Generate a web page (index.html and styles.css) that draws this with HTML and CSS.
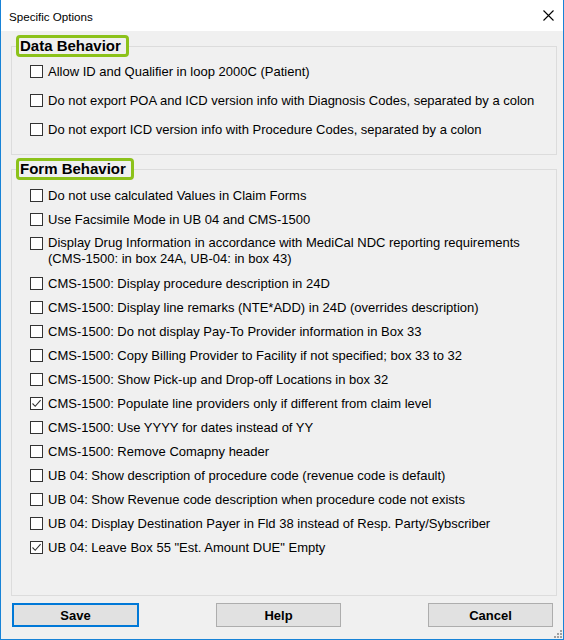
FILE: index.html
```html
<!DOCTYPE html>
<html>
<head>
<meta charset="utf-8">
<title>Specific Options</title>
<link rel="stylesheet" href="styles.css">
</head>
<body>
<div class="window">
  <div class="titlebar">
    <span class="title">Specific Options</span>
    <svg class="close" width="11" height="11" viewBox="0 0 11 11"><path d="M0.5 0.5 L10.5 10.5 M10.5 0.5 L0.5 10.5" stroke="#000" stroke-width="1.1" fill="none"/></svg>
  </div>
  <div class="body">
    <fieldset class="group group-data">
      <legend class="legend">Data Behavior</legend>
      <div class="row"><span class="cb"></span><span class="label">Allow ID and Qualifier in loop 2000C (Patient)</span></div>
      <div class="row"><span class="cb"></span><span class="label">Do not export POA and ICD version info with Diagnosis Codes, separated by a colon</span></div>
      <div class="row"><span class="cb"></span><span class="label">Do not export ICD version info with Procedure Codes, separated by a colon</span></div>
    </fieldset>
    <fieldset class="group group-form">
      <legend class="legend">Form Behavior</legend>
      <div class="row"><span class="cb"></span><span class="label">Do not use calculated Values in Claim Forms</span></div>
      <div class="row"><span class="cb"></span><span class="label">Use Facsimile Mode in UB 04 and CMS-1500</span></div>
      <div class="row multi"><span class="cb"></span><span class="label">Display Drug Information in accordance with MediCal NDC reporting requirements<br>(CMS-1500: in box 24A, UB-04: in box 43)</span></div>
      <div class="row"><span class="cb"></span><span class="label">CMS-1500: Display procedure description in 24D</span></div>
      <div class="row"><span class="cb"></span><span class="label">CMS-1500: Display line remarks (NTE*ADD) in 24D (overrides description)</span></div>
      <div class="row"><span class="cb"></span><span class="label">CMS-1500: Do not display Pay-To Provider information in Box 33</span></div>
      <div class="row"><span class="cb"></span><span class="label">CMS-1500: Copy Billing Provider to Facility if not specified; box 33 to 32</span></div>
      <div class="row"><span class="cb"></span><span class="label">CMS-1500: Show Pick-up and Drop-off Locations in box 32</span></div>
      <div class="row"><span class="cb checked"><svg width="11" height="11" viewBox="0 0 11 11"><path d="M1.5 5.5 L4.2 8.3 L9.6 2.2" stroke="#333" stroke-width="1.1" fill="none"/></svg></span><span class="label">CMS-1500: Populate line providers only if different from claim level</span></div>
      <div class="row"><span class="cb"></span><span class="label">CMS-1500: Use YYYY for dates instead of YY</span></div>
      <div class="row"><span class="cb"></span><span class="label">CMS-1500: Remove Comapny header</span></div>
      <div class="row"><span class="cb"></span><span class="label">UB 04: Show description of procedure code (revenue code is default)</span></div>
      <div class="row"><span class="cb"></span><span class="label">UB 04: Show Revenue code description when procedure code not exists</span></div>
      <div class="row"><span class="cb"></span><span class="label">UB 04: Display Destination Payer in Fld 38 instead of Resp. Party/Sybscriber</span></div>
      <div class="row"><span class="cb checked"><svg width="11" height="11" viewBox="0 0 11 11"><path d="M1.5 5.5 L4.2 8.3 L9.6 2.2" stroke="#333" stroke-width="1.1" fill="none"/></svg></span><span class="label">UB 04: Leave Box 55 "Est. Amount DUE" Empty</span></div>
    </fieldset>
    <div class="buttons">
      <button class="btn btn-save">Save</button>
      <button class="btn btn-help">Help</button>
      <button class="btn btn-cancel">Cancel</button>
    </div>
    <div class="grip">
      <svg width="8" height="8" viewBox="0 0 8 8"><g fill="#a0a0a0"><rect x="6" y="0" width="2" height="2"/><rect x="3" y="3" width="2" height="2"/><rect x="6" y="3" width="2" height="2"/><rect x="0" y="6" width="2" height="2"/><rect x="3" y="6" width="2" height="2"/><rect x="6" y="6" width="2" height="2"/></g></svg>
    </div>
  </div>
</div>
</body>
</html>
```
FILE: styles.css
```css
html, body {
  margin: 0;
  padding: 0;
  background: #f0f0f0;
}
.window {
  box-sizing: border-box;
  width: 564px;
  height: 640px;
  border: 1px solid #1883d7;
  border-top: none;
  background: #f0f0f0;
  font-family: "Liberation Sans", Arial, sans-serif;
  font-size: 13px;
  color: #000;
  display: flex;
  flex-direction: column;
}
.titlebar {
  height: 31px;
  background: #fff;
  display: flex;
  align-items: center;
  justify-content: space-between;
  padding: 0 9px 0 8px;
  flex: none;
}
.title {
  font-size: 11.6px;
  margin-top: 1px;
}
.body {
  flex: 1;
  position: relative;
  padding: 0 6px 0 10px;
  display: flex;
  flex-direction: column;
}
.group {
  border: 1px solid #dcdcdc;
  margin: 0;
  padding: 0 4px;
  min-width: 0;
}
.group-data {
  margin-top: 4px;
  padding-bottom: 10px;
}
.group-form {
  margin-top: 3px;
  padding-top: 3px;
  height: 438px;
  box-sizing: border-box;
}
.legend {
  font-weight: bold;
  font-size: 15px;
  line-height: 16px;
  border: 3px solid #8cc21b;
  border-radius: 4px;
  padding: 0 5px 0 1px;
  margin-left: 0;
}
.row {
  display: flex;
  align-items: center;
  height: 24px;
  padding-left: 14px;
}
.group-data .row {
  height: 29px;
}
.row.multi {
  height: 40px;
  align-items: flex-start;
  padding-top: 4px;
  box-sizing: border-box;
}
.row.multi .cb {
  margin-top: 1.5px;
}
.row.multi .label {
  line-height: 16px;
}
.cb {
  box-sizing: border-box;
  width: 13px;
  height: 13px;
  border: 1px solid #333;
  background: #fff;
  flex: none;
  margin-right: 5px;
  display: flex;
  align-items: center;
  justify-content: center;
}
.label {
  white-space: nowrap;
}
.buttons {
  display: flex;
  margin-top: 7px;
  padding-left: 1px;
}
.btn {
  box-sizing: border-box;
  height: 24px;
  width: 125px;
  background: #e1e1e1;
  border: 1px solid #adadad;
  font-family: "Liberation Sans", Arial, sans-serif;
  font-weight: bold;
  font-size: 13px;
  color: #000;
  padding: 0;
  margin: 0;
}
.btn-save {
  width: 127px;
  border: 2px solid #0078d7;
}
.btn-help {
  margin-left: 77px;
}
.btn-cancel {
  margin-left: 87px;
}
.grip {
  position: absolute;
  right: 1px;
  bottom: 1px;
  line-height: 0;
}
```
